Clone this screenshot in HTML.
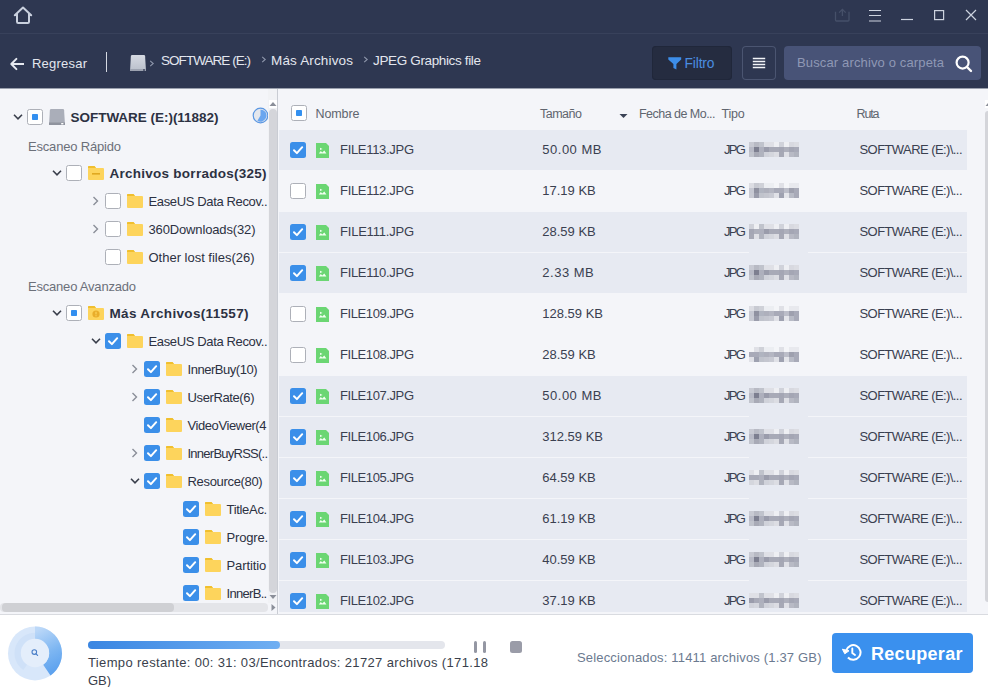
<!DOCTYPE html>
<html><head><meta charset="utf-8"><style>
html,body{margin:0;padding:0;}
body{width:988px;height:687px;overflow:hidden;position:relative;background:#fff;font-family:"Liberation Sans",sans-serif;}
.r{position:absolute;display:block;}
.t{position:absolute;white-space:pre;line-height:1;}
</style></head><body>
<div class="r" style="left:0px;top:0px;width:988px;height:88px;background:#2e3751;"></div><div class="r" style="left:0px;top:33px;width:988px;height:1px;background:#38415b;"></div><svg class="r" style="left:13px;top:5.5px;" width="20" height="19" viewBox="0 0 20 19"><path d="M1.8 9.2 L10 1.6 L18.2 9.2 M4 7.6 V15.8 Q4 17 5.2 17 H14.8 Q16 17 16 15.8 V7.6" fill="none" stroke="#c9d0de" stroke-width="2" stroke-linejoin="round" stroke-linecap="round"/></svg><svg class="r" style="left:834px;top:8px;" width="18" height="15" viewBox="0 0 18 15"><path d="M1.5 3.8 V12 Q1.5 13 2.5 13 H14 Q15 13 15 12 V3.8 M8.4 8 V1.2 M5.1 4.6 L8.4 1.3 L11.7 4.6" fill="none" stroke="#465069" stroke-width="1.3"/></svg><svg class="r" style="left:868px;top:8px;" width="14" height="15" viewBox="0 0 14 15"><path d="M1 2.5 H13 M1 7.5 H13 M1 13 H13" stroke="#cdd3df" stroke-width="1.2"/></svg><svg class="r" style="left:900px;top:18px;" width="14" height="3" viewBox="0 0 14 3"><path d="M1 1.5 H13" stroke="#cdd3df" stroke-width="1.2"/></svg><svg class="r" style="left:933px;top:9px;" width="12" height="12" viewBox="0 0 12 12"><rect x="1.6" y="1.6" width="9" height="9" fill="none" stroke="#cdd3df" stroke-width="1.2"/></svg><svg class="r" style="left:965px;top:9px;" width="12" height="12" viewBox="0 0 12 12"><path d="M1 1 L11 11 M11 1 L1 11" stroke="#cdd3df" stroke-width="1.2"/></svg><svg class="r" style="left:9px;top:57px;" width="17" height="14" viewBox="0 0 17 14"><path d="M15 7 H3" stroke="#e6e9f0" stroke-width="2"/><path d="M7.4 1.9 L2.3 7 L7.4 12.1" fill="none" stroke="#e6e9f0" stroke-width="2" stroke-linecap="round" stroke-linejoin="round"/></svg><div class="t" style="left:32px;top:57.00px;font-size:13px;color:#e3e6ee;letter-spacing:0.219px;">Regresar</div><div class="r" style="left:105.5px;top:52px;width:1.2px;height:20px;background:#d5d9e2;"></div><svg class="r" style="left:130px;top:55px;" width="16" height="16" viewBox="0 0 16 16"><defs><linearGradient id="dg" x1="0" y1="0" x2="0" y2="1"><stop offset="0" stop-color="#d6dae3"/><stop offset="1" stop-color="#b9bfcb"/></linearGradient></defs><path d="M2 0 H14 Q15 0 15.1 1 L16 16 H0 L0.9 1 Q1 0 2 0 Z" fill="url(#dg)"/><rect x="0" y="14" width="16" height="2" fill="#9ca2b0"/><rect x="13" y="14.4" width="2" height="1.2" fill="#2d3650"/></svg><svg class="r" style="left:149px;top:59.5px;" width="6" height="7" viewBox="0 0 6 7"><path d="M1.2 0.8 L4.2 3.5 L1.2 6.2" fill="none" stroke="#8f97ac" stroke-width="1.1"/></svg><div class="t" style="left:161px;top:53.57px;font-size:13.5px;color:#e3e6ee;letter-spacing:-0.958px;">SOFTWARE (E:)</div><svg class="r" style="left:261px;top:55.5px;" width="6" height="7" viewBox="0 0 6 7"><path d="M1.2 0.8 L4.2 3.5 L1.2 6.2" fill="none" stroke="#8f97ac" stroke-width="1.1"/></svg><div class="t" style="left:271px;top:53.57px;font-size:13.5px;color:#e3e6ee;letter-spacing:0.156px;">Más Archivos</div><svg class="r" style="left:363px;top:55.5px;" width="6" height="7" viewBox="0 0 6 7"><path d="M1.2 0.8 L4.2 3.5 L1.2 6.2" fill="none" stroke="#8f97ac" stroke-width="1.1"/></svg><div class="t" style="left:373px;top:53.57px;font-size:13.5px;color:#e3e6ee;letter-spacing:-0.356px;">JPEG Graphics file</div><div class="r" style="left:652px;top:46px;width:80px;height:34px;background:#252c40;border-radius:4px;box-shadow:inset 0 0 0 1px #20273a;"></div><svg class="r" style="left:668px;top:57px;" width="14" height="13" viewBox="0 0 14 13"><path d="M0.3 0.3 H13.2 V2.6 L8.4 7 V12.6 L5.4 11 V7 L0.3 2.6 Z" fill="#3d8ee9"/></svg><div class="t" style="left:684.5px;top:57.32px;font-size:13.8px;color:#4a8ee0;letter-spacing:-0.134px;">Filtro</div><div class="r" style="left:742px;top:46px;width:34px;height:34px;background:transparent;border-radius:4px;box-shadow:inset 0 0 0 1px #4b5571;"></div><svg class="r" style="left:752px;top:57px;" width="14" height="12" viewBox="0 0 14 12"><path d="M0.8 1.5 H13.2 M0.8 4.5 H13.2 M0.8 7.5 H13.2 M0.8 10.5 H13.2" stroke="#f2f4f8" stroke-width="1.3"/></svg><div class="r" style="left:784px;top:46px;width:197px;height:34px;background:#485377;border-radius:4px;"></div><div class="t" style="left:797px;top:56.00px;font-size:13px;color:#8f98b5;letter-spacing:0.139px;">Buscar archivo o carpeta</div><svg class="r" style="left:954px;top:55px;" width="20" height="18" viewBox="0 0 20 18"><circle cx="8.6" cy="7.6" r="6" fill="none" stroke="#ffffff" stroke-width="2.2"/><path d="M13 12 L17 16" stroke="#ffffff" stroke-width="2.4" stroke-linecap="round"/></svg><div class="r" style="left:0px;top:88px;width:988px;height:527px;background:#f4f5f9;"></div><div class="r" style="left:0px;top:88px;width:988px;height:1px;background:#9aa0ad;"></div><div class="r" style="left:0;top:89px;width:268px;height:514px;overflow:hidden;"><svg class="r" style="left:13px;top:23.5px;" width="10" height="8" viewBox="0 0 10 8"><path d="M1 1.8 L5 5.8 L9 1.8" fill="none" stroke="#3a3f4c" stroke-width="1.6"/></svg><svg class="r" style="left:27px;top:20px;" width="16" height="16" viewBox="0 0 16 16"><rect x="0.5" y="0.5" width="15" height="15" rx="2" fill="#fff" stroke="#adb0b8" stroke-width="1"/><rect x="5" y="5" width="6" height="6" rx="0.8" fill="#3390f0"/></svg><svg class="r" style="left:49px;top:20px;" width="16" height="16" viewBox="0 0 16 16"><path d="M2 0 H14 Q15 0 15.1 1 L16 16 H0 L0.9 1 Q1 0 2 0 Z" fill="#aaaeb9"/><rect x="0" y="13.5" width="16" height="2.5" fill="#8f939e"/><rect x="12.2" y="14" width="2.2" height="1.4" fill="#ffffff"/></svg><div class="t" style="left:70.5px;top:21.67px;font-size:13.5px;color:#2c3142;font-weight:700;letter-spacing:-0.028px;">SOFTWARE (E:)(11882)</div><div class="t" style="left:28px;top:51.00px;font-size:13px;color:#6c707a;letter-spacing:-0.185px;">Escaneo Rápido</div><svg class="r" style="left:52px;top:79.5px;" width="10" height="8" viewBox="0 0 10 8"><path d="M1 1.8 L5 5.8 L9 1.8" fill="none" stroke="#3a3f4c" stroke-width="1.6"/></svg><svg class="r" style="left:66px;top:76px;" width="16" height="16" viewBox="0 0 16 16"><rect x="0.5" y="0.5" width="15" height="15" rx="2" fill="#fff" stroke="#adb0b8" stroke-width="1"/></svg><svg class="r" style="left:88px;top:77px;" width="16" height="14" viewBox="0 0 16 14"><path d="M0 1 Q0 0 1 0 H6.5 L8 2 H15 Q16 2 16 3 V13 Q16 14 15 14 H1 Q0 14 0 13 Z" fill="#fdd45c"/><path d="M0 1 Q0 0 1 0 H6.5 L8 2 H0 Z" fill="#f0bf2e"/><rect x="4" y="7" width="8" height="1.6" fill="#e0a820"/></svg><div class="t" style="left:109.5px;top:77.67px;font-size:13.5px;color:#2c3142;font-weight:700;letter-spacing:0.260px;">Archivos borrados(325)</div><svg class="r" style="left:92px;top:106.5px;" width="8" height="10" viewBox="0 0 8 10"><path d="M1.5 1 L5.5 5 L1.5 9" fill="none" stroke="#8a8e98" stroke-width="1.4"/></svg><svg class="r" style="left:105px;top:104px;" width="16" height="16" viewBox="0 0 16 16"><rect x="0.5" y="0.5" width="15" height="15" rx="2" fill="#fff" stroke="#adb0b8" stroke-width="1"/></svg><svg class="r" style="left:127px;top:105px;" width="16" height="14" viewBox="0 0 16 14"><path d="M0 1 Q0 0 1 0 H6.5 L8 2 H15 Q16 2 16 3 V13 Q16 14 15 14 H1 Q0 14 0 13 Z" fill="#fdd45c"/><path d="M0 1 Q0 0 1 0 H6.5 L8 2 H0 Z" fill="#f0bf2e"/></svg><div class="t" style="left:148.5px;top:106.10px;font-size:13px;color:#2c3142;letter-spacing:-0.360px;">EaseUS Data Recov..</div><svg class="r" style="left:92px;top:134.5px;" width="8" height="10" viewBox="0 0 8 10"><path d="M1.5 1 L5.5 5 L1.5 9" fill="none" stroke="#8a8e98" stroke-width="1.4"/></svg><svg class="r" style="left:105px;top:132px;" width="16" height="16" viewBox="0 0 16 16"><rect x="0.5" y="0.5" width="15" height="15" rx="2" fill="#fff" stroke="#adb0b8" stroke-width="1"/></svg><svg class="r" style="left:127px;top:133px;" width="16" height="14" viewBox="0 0 16 14"><path d="M0 1 Q0 0 1 0 H6.5 L8 2 H15 Q16 2 16 3 V13 Q16 14 15 14 H1 Q0 14 0 13 Z" fill="#fdd45c"/><path d="M0 1 Q0 0 1 0 H6.5 L8 2 H0 Z" fill="#f0bf2e"/></svg><div class="t" style="left:148.5px;top:134.10px;font-size:13px;color:#2c3142;letter-spacing:-0.142px;">360Downloads(32)</div><svg class="r" style="left:105px;top:160px;" width="16" height="16" viewBox="0 0 16 16"><rect x="0.5" y="0.5" width="15" height="15" rx="2" fill="#fff" stroke="#adb0b8" stroke-width="1"/></svg><svg class="r" style="left:127px;top:161px;" width="16" height="14" viewBox="0 0 16 14"><path d="M0 1 Q0 0 1 0 H6.5 L8 2 H15 Q16 2 16 3 V13 Q16 14 15 14 H1 Q0 14 0 13 Z" fill="#fdd45c"/><path d="M0 1 Q0 0 1 0 H6.5 L8 2 H0 Z" fill="#f0bf2e"/></svg><div class="t" style="left:148.5px;top:162.10px;font-size:13px;color:#2c3142;letter-spacing:-0.011px;">Other lost files(26)</div><div class="t" style="left:28px;top:191.00px;font-size:13px;color:#6c707a;letter-spacing:-0.205px;">Escaneo Avanzado</div><svg class="r" style="left:52px;top:219.5px;" width="10" height="8" viewBox="0 0 10 8"><path d="M1 1.8 L5 5.8 L9 1.8" fill="none" stroke="#3a3f4c" stroke-width="1.6"/></svg><svg class="r" style="left:66px;top:216px;" width="16" height="16" viewBox="0 0 16 16"><rect x="0.5" y="0.5" width="15" height="15" rx="2" fill="#fff" stroke="#adb0b8" stroke-width="1"/><rect x="5" y="5" width="6" height="6" rx="0.8" fill="#3390f0"/></svg><svg class="r" style="left:88px;top:217px;" width="16" height="14" viewBox="0 0 16 14"><path d="M0 1 Q0 0 1 0 H6.5 L8 2 H15 Q16 2 16 3 V13 Q16 14 15 14 H1 Q0 14 0 13 Z" fill="#fdd45c"/><path d="M0 1 Q0 0 1 0 H6.5 L8 2 H0 Z" fill="#f0bf2e"/><circle cx="8" cy="8" r="3.6" fill="#e9ad2a"/><rect x="7.4" y="5.8" width="1.2" height="2.6" fill="#fdd45c"/><rect x="7.4" y="9.2" width="1.2" height="1.1" fill="#fdd45c"/></svg><div class="t" style="left:109.5px;top:217.67px;font-size:13.5px;color:#2c3142;font-weight:700;letter-spacing:0.329px;">Más Archivos(11557)</div><svg class="r" style="left:91px;top:247.5px;" width="10" height="8" viewBox="0 0 10 8"><path d="M1 1.8 L5 5.8 L9 1.8" fill="none" stroke="#3a3f4c" stroke-width="1.6"/></svg><svg class="r" style="left:105px;top:244px;" width="16" height="16" viewBox="0 0 16 16"><rect x="0" y="0" width="16" height="16" rx="2.5" fill="#3b8fe9"/><path d="M4 8.3 L6.9 11.1 L12.2 5.2" fill="none" stroke="#fff" stroke-width="2" stroke-linecap="round" stroke-linejoin="round"/></svg><svg class="r" style="left:127px;top:245px;" width="16" height="14" viewBox="0 0 16 14"><path d="M0 1 Q0 0 1 0 H6.5 L8 2 H15 Q16 2 16 3 V13 Q16 14 15 14 H1 Q0 14 0 13 Z" fill="#fdd45c"/><path d="M0 1 Q0 0 1 0 H6.5 L8 2 H0 Z" fill="#f0bf2e"/></svg><div class="t" style="left:148.5px;top:246.10px;font-size:13px;color:#2c3142;letter-spacing:-0.360px;">EaseUS Data Recov..</div><svg class="r" style="left:131px;top:274.5px;" width="8" height="10" viewBox="0 0 8 10"><path d="M1.5 1 L5.5 5 L1.5 9" fill="none" stroke="#8a8e98" stroke-width="1.4"/></svg><svg class="r" style="left:144px;top:272px;" width="16" height="16" viewBox="0 0 16 16"><rect x="0" y="0" width="16" height="16" rx="2.5" fill="#3b8fe9"/><path d="M4 8.3 L6.9 11.1 L12.2 5.2" fill="none" stroke="#fff" stroke-width="2" stroke-linecap="round" stroke-linejoin="round"/></svg><svg class="r" style="left:166px;top:273px;" width="16" height="14" viewBox="0 0 16 14"><path d="M0 1 Q0 0 1 0 H6.5 L8 2 H15 Q16 2 16 3 V13 Q16 14 15 14 H1 Q0 14 0 13 Z" fill="#fdd45c"/><path d="M0 1 Q0 0 1 0 H6.5 L8 2 H0 Z" fill="#f0bf2e"/></svg><div class="t" style="left:187.5px;top:274.10px;font-size:13px;color:#2c3142;letter-spacing:-0.469px;">InnerBuy(10)</div><svg class="r" style="left:131px;top:302.5px;" width="8" height="10" viewBox="0 0 8 10"><path d="M1.5 1 L5.5 5 L1.5 9" fill="none" stroke="#8a8e98" stroke-width="1.4"/></svg><svg class="r" style="left:144px;top:300px;" width="16" height="16" viewBox="0 0 16 16"><rect x="0" y="0" width="16" height="16" rx="2.5" fill="#3b8fe9"/><path d="M4 8.3 L6.9 11.1 L12.2 5.2" fill="none" stroke="#fff" stroke-width="2" stroke-linecap="round" stroke-linejoin="round"/></svg><svg class="r" style="left:166px;top:301px;" width="16" height="14" viewBox="0 0 16 14"><path d="M0 1 Q0 0 1 0 H6.5 L8 2 H15 Q16 2 16 3 V13 Q16 14 15 14 H1 Q0 14 0 13 Z" fill="#fdd45c"/><path d="M0 1 Q0 0 1 0 H6.5 L8 2 H0 Z" fill="#f0bf2e"/></svg><div class="t" style="left:187.5px;top:302.10px;font-size:13px;color:#2c3142;letter-spacing:-0.380px;">UserRate(6)</div><svg class="r" style="left:144px;top:328px;" width="16" height="16" viewBox="0 0 16 16"><rect x="0" y="0" width="16" height="16" rx="2.5" fill="#3b8fe9"/><path d="M4 8.3 L6.9 11.1 L12.2 5.2" fill="none" stroke="#fff" stroke-width="2" stroke-linecap="round" stroke-linejoin="round"/></svg><svg class="r" style="left:166px;top:329px;" width="16" height="14" viewBox="0 0 16 14"><path d="M0 1 Q0 0 1 0 H6.5 L8 2 H15 Q16 2 16 3 V13 Q16 14 15 14 H1 Q0 14 0 13 Z" fill="#fdd45c"/><path d="M0 1 Q0 0 1 0 H6.5 L8 2 H0 Z" fill="#f0bf2e"/></svg><div class="t" style="left:187.5px;top:330.10px;font-size:13px;color:#2c3142;letter-spacing:-0.423px;">VideoViewer(4</div><svg class="r" style="left:131px;top:358.5px;" width="8" height="10" viewBox="0 0 8 10"><path d="M1.5 1 L5.5 5 L1.5 9" fill="none" stroke="#8a8e98" stroke-width="1.4"/></svg><svg class="r" style="left:144px;top:356px;" width="16" height="16" viewBox="0 0 16 16"><rect x="0" y="0" width="16" height="16" rx="2.5" fill="#3b8fe9"/><path d="M4 8.3 L6.9 11.1 L12.2 5.2" fill="none" stroke="#fff" stroke-width="2" stroke-linecap="round" stroke-linejoin="round"/></svg><svg class="r" style="left:166px;top:357px;" width="16" height="14" viewBox="0 0 16 14"><path d="M0 1 Q0 0 1 0 H6.5 L8 2 H15 Q16 2 16 3 V13 Q16 14 15 14 H1 Q0 14 0 13 Z" fill="#fdd45c"/><path d="M0 1 Q0 0 1 0 H6.5 L8 2 H0 Z" fill="#f0bf2e"/></svg><div class="t" style="left:187.5px;top:358.10px;font-size:13px;color:#2c3142;letter-spacing:-0.748px;">InnerBuyRSS(..</div><svg class="r" style="left:130px;top:387.5px;" width="10" height="8" viewBox="0 0 10 8"><path d="M1 1.8 L5 5.8 L9 1.8" fill="none" stroke="#3a3f4c" stroke-width="1.6"/></svg><svg class="r" style="left:144px;top:384px;" width="16" height="16" viewBox="0 0 16 16"><rect x="0" y="0" width="16" height="16" rx="2.5" fill="#3b8fe9"/><path d="M4 8.3 L6.9 11.1 L12.2 5.2" fill="none" stroke="#fff" stroke-width="2" stroke-linecap="round" stroke-linejoin="round"/></svg><svg class="r" style="left:166px;top:385px;" width="16" height="14" viewBox="0 0 16 14"><path d="M0 1 Q0 0 1 0 H6.5 L8 2 H15 Q16 2 16 3 V13 Q16 14 15 14 H1 Q0 14 0 13 Z" fill="#fdd45c"/><path d="M0 1 Q0 0 1 0 H6.5 L8 2 H0 Z" fill="#f0bf2e"/></svg><div class="t" style="left:187.5px;top:386.10px;font-size:13px;color:#2c3142;letter-spacing:-0.324px;">Resource(80)</div><svg class="r" style="left:183px;top:412px;" width="16" height="16" viewBox="0 0 16 16"><rect x="0" y="0" width="16" height="16" rx="2.5" fill="#3b8fe9"/><path d="M4 8.3 L6.9 11.1 L12.2 5.2" fill="none" stroke="#fff" stroke-width="2" stroke-linecap="round" stroke-linejoin="round"/></svg><svg class="r" style="left:205px;top:413px;" width="16" height="14" viewBox="0 0 16 14"><path d="M0 1 Q0 0 1 0 H6.5 L8 2 H15 Q16 2 16 3 V13 Q16 14 15 14 H1 Q0 14 0 13 Z" fill="#fdd45c"/><path d="M0 1 Q0 0 1 0 H6.5 L8 2 H0 Z" fill="#f0bf2e"/></svg><div class="t" style="left:226.5px;top:414.10px;font-size:13px;color:#2c3142;letter-spacing:-0.308px;">TitleAc.</div><svg class="r" style="left:183px;top:440px;" width="16" height="16" viewBox="0 0 16 16"><rect x="0" y="0" width="16" height="16" rx="2.5" fill="#3b8fe9"/><path d="M4 8.3 L6.9 11.1 L12.2 5.2" fill="none" stroke="#fff" stroke-width="2" stroke-linecap="round" stroke-linejoin="round"/></svg><svg class="r" style="left:205px;top:441px;" width="16" height="14" viewBox="0 0 16 14"><path d="M0 1 Q0 0 1 0 H6.5 L8 2 H15 Q16 2 16 3 V13 Q16 14 15 14 H1 Q0 14 0 13 Z" fill="#fdd45c"/><path d="M0 1 Q0 0 1 0 H6.5 L8 2 H0 Z" fill="#f0bf2e"/></svg><div class="t" style="left:226.5px;top:442.10px;font-size:13px;color:#2c3142;letter-spacing:-0.173px;">Progre.</div><svg class="r" style="left:183px;top:468px;" width="16" height="16" viewBox="0 0 16 16"><rect x="0" y="0" width="16" height="16" rx="2.5" fill="#3b8fe9"/><path d="M4 8.3 L6.9 11.1 L12.2 5.2" fill="none" stroke="#fff" stroke-width="2" stroke-linecap="round" stroke-linejoin="round"/></svg><svg class="r" style="left:205px;top:469px;" width="16" height="14" viewBox="0 0 16 14"><path d="M0 1 Q0 0 1 0 H6.5 L8 2 H15 Q16 2 16 3 V13 Q16 14 15 14 H1 Q0 14 0 13 Z" fill="#fdd45c"/><path d="M0 1 Q0 0 1 0 H6.5 L8 2 H0 Z" fill="#f0bf2e"/></svg><div class="t" style="left:226.5px;top:470.10px;font-size:13px;color:#2c3142;letter-spacing:-0.096px;">Partitio</div><svg class="r" style="left:183px;top:496px;" width="16" height="16" viewBox="0 0 16 16"><rect x="0" y="0" width="16" height="16" rx="2.5" fill="#3b8fe9"/><path d="M4 8.3 L6.9 11.1 L12.2 5.2" fill="none" stroke="#fff" stroke-width="2" stroke-linecap="round" stroke-linejoin="round"/></svg><svg class="r" style="left:205px;top:497px;" width="16" height="14" viewBox="0 0 16 14"><path d="M0 1 Q0 0 1 0 H6.5 L8 2 H15 Q16 2 16 3 V13 Q16 14 15 14 H1 Q0 14 0 13 Z" fill="#fdd45c"/><path d="M0 1 Q0 0 1 0 H6.5 L8 2 H0 Z" fill="#f0bf2e"/></svg><div class="t" style="left:226.5px;top:498.10px;font-size:13px;color:#2c3142;letter-spacing:-0.690px;">InnerB..</div></div><svg class="r" style="left:252px;top:107px;" width="17" height="17" viewBox="0 0 17 17"><circle cx="8.5" cy="8.5" r="7.3" fill="#e4e7ed" stroke="#5b97e2" stroke-width="1.2"/><path d="M8.5 8.5 V2.4 A6.1 6.1 0 1 1 5.4 13.8 Z" fill="#6aa6ef"/></svg><div class="r" style="left:268px;top:89px;width:9px;height:514px;background:#f1f2f5;"></div><div class="r" style="left:269px;top:100px;width:8px;height:8px;background:#ffffff;"></div><svg class="r" style="left:269px;top:101px;" width="8" height="6" viewBox="0 0 8 6"><path d="M0.5 5 L4 1 L7.5 5 Z" fill="#8b8f99"/></svg><div class="r" style="left:269px;top:109px;width:8px;height:484px;background:#d4d5da;border-radius:4px;"></div><svg class="r" style="left:269px;top:594px;" width="8" height="6" viewBox="0 0 8 6"><path d="M0.5 1 L4 5 L7.5 1 Z" fill="#8b8f99"/></svg><div class="r" style="left:0px;top:603px;width:268px;height:9px;background:#e4e5e9;border-radius:4px;"></div><div class="r" style="left:2px;top:603px;width:172px;height:9px;background:#cfd0d4;border-radius:4px;"></div><svg class="r" style="left:270px;top:603px;" width="7" height="9" viewBox="0 0 7 9"><path d="M1.5 1 L5.5 4.5 L1.5 8 Z" fill="#8b8f99"/></svg><div class="r" style="left:277px;top:89px;width:1px;height:526px;background:#c9ccd3;"></div><svg class="r" style="left:291px;top:105px;" width="16" height="16" viewBox="0 0 16 16"><rect x="0.5" y="0.5" width="15" height="15" rx="2" fill="#fff" stroke="#adb0b8" stroke-width="1"/><rect x="5" y="5" width="6" height="6" rx="0.8" fill="#3390f0"/></svg><div class="t" style="left:315.5px;top:108.42px;font-size:12.5px;color:#60656f;letter-spacing:-0.094px;">Nombre</div><div class="t" style="left:540px;top:108.42px;font-size:12.5px;color:#60656f;letter-spacing:-0.497px;">Tamaño</div><svg class="r" style="left:619px;top:113px;" width="9" height="6" viewBox="0 0 9 6"><path d="M0.5 1 L4.5 5 L8.5 1 Z" fill="#3a4255"/></svg><div class="t" style="left:639px;top:108.42px;font-size:12.5px;color:#60656f;letter-spacing:-0.529px;">Fecha de Mo...</div><div class="t" style="left:721.6px;top:108.42px;font-size:12.5px;color:#60656f;letter-spacing:-0.286px;">Tipo</div><div class="t" style="left:856.5px;top:108.42px;font-size:12.5px;color:#60656f;letter-spacing:-1.135px;">Ruta</div><div class="r" style="left:278px;top:89px;width:707px;height:523px;overflow:hidden;"><div class="r" style="left:1px;top:41px;width:688px;height:40px;background:#e7eaf2;"></div><svg class="r" style="left:12px;top:53px;" width="16" height="16" viewBox="0 0 16 16"><rect x="0" y="0" width="16" height="16" rx="2.5" fill="#3b8fe9"/><path d="M4 8.3 L6.9 11.1 L12.2 5.2" fill="none" stroke="#fff" stroke-width="2" stroke-linecap="round" stroke-linejoin="round"/></svg><svg class="r" style="left:38px;top:54px;" width="13" height="15" viewBox="0 0 13 15"><path d="M0 0 H10 L13 3 V15 H0 Z" fill="#6bd673"/><path d="M4 4.8 L6.6 5.9 L4 7 Z M2.8 10.6 L4.8 8 L6.3 9.4 L8.3 7.6 L10.4 10.6 Z" fill="#f2fff2"/></svg><div class="t" style="left:62px;top:54.40px;font-size:13px;color:#3a4050;letter-spacing:-0.308px;">FILE113.JPG</div><div class="t" style="left:264.29999999999995px;top:54.40px;font-size:13px;color:#3a4050;letter-spacing:0.506px;">50.00 MB</div><div class="t" style="left:446px;top:54.40px;font-size:13px;color:#3a4050;letter-spacing:-1.648px;">JPG</div><svg class="r" style="left:471px;top:53px;" width="50" height="15" viewBox="0 0 50 15"><rect x="0" y="0" width="5" height="5" fill="#c8cad3"/><rect x="5" y="0" width="5" height="5" fill="#b8bac4"/><rect x="10" y="0" width="5" height="5" fill="#c0c3cc"/><rect x="15" y="0" width="5" height="5" fill="#dfe0e6"/><rect x="20" y="0" width="5" height="5" fill="#dfe0e6"/><rect x="25" y="0" width="5" height="5" fill="#eeeff3"/><rect x="30" y="0" width="5" height="5" fill="#d0d2da"/><rect x="35" y="0" width="5" height="5" fill="#eeeff3"/><rect x="40" y="0" width="5" height="5" fill="#d8d9e0"/><rect x="45" y="0" width="5" height="5" fill="#dcdde3"/><rect x="0" y="5" width="5" height="5" fill="#b8bac6"/><rect x="5" y="5" width="5" height="5" fill="#7d7f90"/><rect x="10" y="5" width="5" height="5" fill="#aeb0bd"/><rect x="15" y="5" width="5" height="5" fill="#9a9cab"/><rect x="20" y="5" width="5" height="5" fill="#a8aab7"/><rect x="25" y="5" width="5" height="5" fill="#a8aab7"/><rect x="30" y="5" width="5" height="5" fill="#a4a6b4"/><rect x="35" y="5" width="5" height="5" fill="#aeb0bc"/><rect x="40" y="5" width="5" height="5" fill="#a4a6b4"/><rect x="45" y="5" width="5" height="5" fill="#a8aab8"/><rect x="0" y="10" width="5" height="5" fill="#c0c3cc"/><rect x="5" y="10" width="5" height="5" fill="#a8aab6"/><rect x="10" y="10" width="5" height="5" fill="#b0b3be"/><rect x="15" y="10" width="5" height="5" fill="#d0d2da"/><rect x="20" y="10" width="5" height="5" fill="#d4d6dd"/><rect x="25" y="10" width="5" height="5" fill="#dcdde3"/><rect x="30" y="10" width="5" height="5" fill="#a6a8b5"/><rect x="35" y="10" width="5" height="5" fill="#dfe0e6"/><rect x="40" y="10" width="5" height="5" fill="#b8bac5"/><rect x="45" y="10" width="5" height="5" fill="#b0b3be"/></svg><div class="t" style="left:581.5px;top:54.40px;font-size:13px;color:#3a4050;letter-spacing:-0.574px;">SOFTWARE (E:)\...</div><svg class="r" style="left:12px;top:94px;" width="16" height="16" viewBox="0 0 16 16"><rect x="0.5" y="0.5" width="15" height="15" rx="2" fill="#fff" stroke="#adb0b8" stroke-width="1"/></svg><svg class="r" style="left:38px;top:95px;" width="13" height="15" viewBox="0 0 13 15"><path d="M0 0 H10 L13 3 V15 H0 Z" fill="#6bd673"/><path d="M4 4.8 L6.6 5.9 L4 7 Z M2.8 10.6 L4.8 8 L6.3 9.4 L8.3 7.6 L10.4 10.6 Z" fill="#f2fff2"/></svg><div class="t" style="left:62px;top:95.40px;font-size:13px;color:#3a4050;letter-spacing:-0.308px;">FILE112.JPG</div><div class="t" style="left:264.29999999999995px;top:95.40px;font-size:13px;color:#3a4050;">17.19 KB</div><div class="t" style="left:446px;top:95.40px;font-size:13px;color:#3a4050;letter-spacing:-1.648px;">JPG</div><svg class="r" style="left:471px;top:94px;" width="50" height="15" viewBox="0 0 50 15"><rect x="0" y="0" width="5" height="5" fill="#dcdde3"/><rect x="5" y="0" width="5" height="5" fill="#c8cad2"/><rect x="10" y="0" width="5" height="5" fill="#cfd1d8"/><rect x="15" y="0" width="5" height="5" fill="#eceef2"/><rect x="20" y="0" width="5" height="5" fill="#eceef2"/><rect x="25" y="0" width="5" height="5" fill="#f4f5f8"/><rect x="30" y="0" width="5" height="5" fill="#dfe0e6"/><rect x="35" y="0" width="5" height="5" fill="#f4f5f8"/><rect x="40" y="0" width="5" height="5" fill="#e8e9ee"/><rect x="45" y="0" width="5" height="5" fill="#e8e9ee"/><rect x="0" y="5" width="5" height="5" fill="#c6c8d2"/><rect x="5" y="5" width="5" height="5" fill="#8f91a0"/><rect x="10" y="5" width="5" height="5" fill="#b0b4c0"/><rect x="15" y="5" width="5" height="5" fill="#aeb0bc"/><rect x="20" y="5" width="5" height="5" fill="#b4b6c2"/><rect x="25" y="5" width="5" height="5" fill="#a8aab8"/><rect x="30" y="5" width="5" height="5" fill="#a8aab8"/><rect x="35" y="5" width="5" height="5" fill="#bcbec9"/><rect x="40" y="5" width="5" height="5" fill="#9ea0ae"/><rect x="45" y="5" width="5" height="5" fill="#a8aab8"/><rect x="0" y="10" width="5" height="5" fill="#c8cad3"/><rect x="5" y="10" width="5" height="5" fill="#9a9cab"/><rect x="10" y="10" width="5" height="5" fill="#c0c3cc"/><rect x="15" y="10" width="5" height="5" fill="#c4c6cf"/><rect x="20" y="10" width="5" height="5" fill="#c8cad3"/><rect x="25" y="10" width="5" height="5" fill="#e0e1e7"/><rect x="30" y="10" width="5" height="5" fill="#9ea1b0"/><rect x="35" y="10" width="5" height="5" fill="#e4e5ea"/><rect x="40" y="10" width="5" height="5" fill="#b8bbc6"/><rect x="45" y="10" width="5" height="5" fill="#a8aab8"/></svg><div class="t" style="left:581.5px;top:95.40px;font-size:13px;color:#3a4050;letter-spacing:-0.574px;">SOFTWARE (E:)\...</div><div class="r" style="left:1px;top:123px;width:688px;height:40px;background:#e7eaf2;"></div><div class="r" style="left:471px;top:163px;width:59px;height:1px;background:#e7eaf2;"></div><svg class="r" style="left:12px;top:135px;" width="16" height="16" viewBox="0 0 16 16"><rect x="0" y="0" width="16" height="16" rx="2.5" fill="#3b8fe9"/><path d="M4 8.3 L6.9 11.1 L12.2 5.2" fill="none" stroke="#fff" stroke-width="2" stroke-linecap="round" stroke-linejoin="round"/></svg><svg class="r" style="left:38px;top:136px;" width="13" height="15" viewBox="0 0 13 15"><path d="M0 0 H10 L13 3 V15 H0 Z" fill="#6bd673"/><path d="M4 4.8 L6.6 5.9 L4 7 Z M2.8 10.6 L4.8 8 L6.3 9.4 L8.3 7.6 L10.4 10.6 Z" fill="#f2fff2"/></svg><div class="t" style="left:62px;top:136.40px;font-size:13px;color:#3a4050;letter-spacing:-0.211px;">FILE111.JPG</div><div class="t" style="left:264.29999999999995px;top:136.40px;font-size:13px;color:#3a4050;">28.59 KB</div><div class="t" style="left:446px;top:136.40px;font-size:13px;color:#3a4050;letter-spacing:-1.648px;">JPG</div><svg class="r" style="left:471px;top:135px;" width="50" height="15" viewBox="0 0 50 15"><rect x="0" y="0" width="5" height="5" fill="#d0d2da"/><rect x="5" y="0" width="5" height="5" fill="#eeeff3"/><rect x="10" y="0" width="5" height="5" fill="#c0c3cc"/><rect x="15" y="0" width="5" height="5" fill="#dfe0e6"/><rect x="20" y="0" width="5" height="5" fill="#dfe0e6"/><rect x="25" y="0" width="5" height="5" fill="#eeeff3"/><rect x="30" y="0" width="5" height="5" fill="#d0d2da"/><rect x="35" y="0" width="5" height="5" fill="#eeeff3"/><rect x="40" y="0" width="5" height="5" fill="#d8d9e0"/><rect x="45" y="0" width="5" height="5" fill="#dcdde3"/><rect x="0" y="5" width="5" height="5" fill="#a4a6b4"/><rect x="5" y="5" width="5" height="5" fill="#aeb0bc"/><rect x="10" y="5" width="5" height="5" fill="#aeb0bd"/><rect x="15" y="5" width="5" height="5" fill="#9a9cab"/><rect x="20" y="5" width="5" height="5" fill="#a8aab7"/><rect x="25" y="5" width="5" height="5" fill="#a8aab7"/><rect x="30" y="5" width="5" height="5" fill="#a4a6b4"/><rect x="35" y="5" width="5" height="5" fill="#aeb0bc"/><rect x="40" y="5" width="5" height="5" fill="#a4a6b4"/><rect x="45" y="5" width="5" height="5" fill="#a8aab8"/><rect x="0" y="10" width="5" height="5" fill="#a6a8b5"/><rect x="5" y="10" width="5" height="5" fill="#dfe0e6"/><rect x="10" y="10" width="5" height="5" fill="#b0b3be"/><rect x="15" y="10" width="5" height="5" fill="#d0d2da"/><rect x="20" y="10" width="5" height="5" fill="#d4d6dd"/><rect x="25" y="10" width="5" height="5" fill="#dcdde3"/><rect x="30" y="10" width="5" height="5" fill="#a6a8b5"/><rect x="35" y="10" width="5" height="5" fill="#dfe0e6"/><rect x="40" y="10" width="5" height="5" fill="#b8bac5"/><rect x="45" y="10" width="5" height="5" fill="#b0b3be"/></svg><div class="t" style="left:581.5px;top:136.40px;font-size:13px;color:#3a4050;letter-spacing:-0.574px;">SOFTWARE (E:)\...</div><div class="r" style="left:1px;top:164px;width:688px;height:40px;background:#e7eaf2;"></div><svg class="r" style="left:12px;top:176px;" width="16" height="16" viewBox="0 0 16 16"><rect x="0" y="0" width="16" height="16" rx="2.5" fill="#3b8fe9"/><path d="M4 8.3 L6.9 11.1 L12.2 5.2" fill="none" stroke="#fff" stroke-width="2" stroke-linecap="round" stroke-linejoin="round"/></svg><svg class="r" style="left:38px;top:177px;" width="13" height="15" viewBox="0 0 13 15"><path d="M0 0 H10 L13 3 V15 H0 Z" fill="#6bd673"/><path d="M4 4.8 L6.6 5.9 L4 7 Z M2.8 10.6 L4.8 8 L6.3 9.4 L8.3 7.6 L10.4 10.6 Z" fill="#f2fff2"/></svg><div class="t" style="left:62px;top:177.40px;font-size:13px;color:#3a4050;letter-spacing:-0.308px;">FILE110.JPG</div><div class="t" style="left:264.29999999999995px;top:177.40px;font-size:13px;color:#3a4050;letter-spacing:0.513px;">2.33 MB</div><div class="t" style="left:446px;top:177.40px;font-size:13px;color:#3a4050;letter-spacing:-1.648px;">JPG</div><svg class="r" style="left:471px;top:176px;" width="50" height="15" viewBox="0 0 50 15"><rect x="0" y="0" width="5" height="5" fill="#c8cad3"/><rect x="5" y="0" width="5" height="5" fill="#b8bac4"/><rect x="10" y="0" width="5" height="5" fill="#c0c3cc"/><rect x="15" y="0" width="5" height="5" fill="#dfe0e6"/><rect x="20" y="0" width="5" height="5" fill="#dfe0e6"/><rect x="25" y="0" width="5" height="5" fill="#eeeff3"/><rect x="30" y="0" width="5" height="5" fill="#d0d2da"/><rect x="35" y="0" width="5" height="5" fill="#eeeff3"/><rect x="40" y="0" width="5" height="5" fill="#d8d9e0"/><rect x="45" y="0" width="5" height="5" fill="#dcdde3"/><rect x="0" y="5" width="5" height="5" fill="#b8bac6"/><rect x="5" y="5" width="5" height="5" fill="#7d7f90"/><rect x="10" y="5" width="5" height="5" fill="#aeb0bd"/><rect x="15" y="5" width="5" height="5" fill="#9a9cab"/><rect x="20" y="5" width="5" height="5" fill="#a8aab7"/><rect x="25" y="5" width="5" height="5" fill="#a8aab7"/><rect x="30" y="5" width="5" height="5" fill="#a4a6b4"/><rect x="35" y="5" width="5" height="5" fill="#aeb0bc"/><rect x="40" y="5" width="5" height="5" fill="#a4a6b4"/><rect x="45" y="5" width="5" height="5" fill="#a8aab8"/><rect x="0" y="10" width="5" height="5" fill="#c0c3cc"/><rect x="5" y="10" width="5" height="5" fill="#a8aab6"/><rect x="10" y="10" width="5" height="5" fill="#b0b3be"/><rect x="15" y="10" width="5" height="5" fill="#d0d2da"/><rect x="20" y="10" width="5" height="5" fill="#d4d6dd"/><rect x="25" y="10" width="5" height="5" fill="#dcdde3"/><rect x="30" y="10" width="5" height="5" fill="#a6a8b5"/><rect x="35" y="10" width="5" height="5" fill="#dfe0e6"/><rect x="40" y="10" width="5" height="5" fill="#b8bac5"/><rect x="45" y="10" width="5" height="5" fill="#b0b3be"/></svg><div class="t" style="left:581.5px;top:177.40px;font-size:13px;color:#3a4050;letter-spacing:-0.574px;">SOFTWARE (E:)\...</div><svg class="r" style="left:12px;top:217px;" width="16" height="16" viewBox="0 0 16 16"><rect x="0.5" y="0.5" width="15" height="15" rx="2" fill="#fff" stroke="#adb0b8" stroke-width="1"/></svg><svg class="r" style="left:38px;top:218px;" width="13" height="15" viewBox="0 0 13 15"><path d="M0 0 H10 L13 3 V15 H0 Z" fill="#6bd673"/><path d="M4 4.8 L6.6 5.9 L4 7 Z M2.8 10.6 L4.8 8 L6.3 9.4 L8.3 7.6 L10.4 10.6 Z" fill="#f2fff2"/></svg><div class="t" style="left:62px;top:218.40px;font-size:13px;color:#3a4050;letter-spacing:-0.405px;">FILE109.JPG</div><div class="t" style="left:264.29999999999995px;top:218.40px;font-size:13px;color:#3a4050;">128.59 KB</div><div class="t" style="left:446px;top:218.40px;font-size:13px;color:#3a4050;letter-spacing:-1.648px;">JPG</div><svg class="r" style="left:471px;top:217px;" width="50" height="15" viewBox="0 0 50 15"><rect x="0" y="0" width="5" height="5" fill="#dcdde3"/><rect x="5" y="0" width="5" height="5" fill="#c8cad2"/><rect x="10" y="0" width="5" height="5" fill="#cfd1d8"/><rect x="15" y="0" width="5" height="5" fill="#eceef2"/><rect x="20" y="0" width="5" height="5" fill="#eceef2"/><rect x="25" y="0" width="5" height="5" fill="#f4f5f8"/><rect x="30" y="0" width="5" height="5" fill="#dfe0e6"/><rect x="35" y="0" width="5" height="5" fill="#f4f5f8"/><rect x="40" y="0" width="5" height="5" fill="#e8e9ee"/><rect x="45" y="0" width="5" height="5" fill="#e8e9ee"/><rect x="0" y="5" width="5" height="5" fill="#c6c8d2"/><rect x="5" y="5" width="5" height="5" fill="#8f91a0"/><rect x="10" y="5" width="5" height="5" fill="#b0b4c0"/><rect x="15" y="5" width="5" height="5" fill="#aeb0bc"/><rect x="20" y="5" width="5" height="5" fill="#b4b6c2"/><rect x="25" y="5" width="5" height="5" fill="#a8aab8"/><rect x="30" y="5" width="5" height="5" fill="#a8aab8"/><rect x="35" y="5" width="5" height="5" fill="#bcbec9"/><rect x="40" y="5" width="5" height="5" fill="#9ea0ae"/><rect x="45" y="5" width="5" height="5" fill="#a8aab8"/><rect x="0" y="10" width="5" height="5" fill="#c8cad3"/><rect x="5" y="10" width="5" height="5" fill="#9a9cab"/><rect x="10" y="10" width="5" height="5" fill="#c0c3cc"/><rect x="15" y="10" width="5" height="5" fill="#c4c6cf"/><rect x="20" y="10" width="5" height="5" fill="#c8cad3"/><rect x="25" y="10" width="5" height="5" fill="#e0e1e7"/><rect x="30" y="10" width="5" height="5" fill="#9ea1b0"/><rect x="35" y="10" width="5" height="5" fill="#e4e5ea"/><rect x="40" y="10" width="5" height="5" fill="#b8bbc6"/><rect x="45" y="10" width="5" height="5" fill="#a8aab8"/></svg><div class="t" style="left:581.5px;top:218.40px;font-size:13px;color:#3a4050;letter-spacing:-0.574px;">SOFTWARE (E:)\...</div><svg class="r" style="left:12px;top:258px;" width="16" height="16" viewBox="0 0 16 16"><rect x="0.5" y="0.5" width="15" height="15" rx="2" fill="#fff" stroke="#adb0b8" stroke-width="1"/></svg><svg class="r" style="left:38px;top:259px;" width="13" height="15" viewBox="0 0 13 15"><path d="M0 0 H10 L13 3 V15 H0 Z" fill="#6bd673"/><path d="M4 4.8 L6.6 5.9 L4 7 Z M2.8 10.6 L4.8 8 L6.3 9.4 L8.3 7.6 L10.4 10.6 Z" fill="#f2fff2"/></svg><div class="t" style="left:62px;top:259.40px;font-size:13px;color:#3a4050;letter-spacing:-0.405px;">FILE108.JPG</div><div class="t" style="left:264.29999999999995px;top:259.40px;font-size:13px;color:#3a4050;">28.59 KB</div><div class="t" style="left:446px;top:259.40px;font-size:13px;color:#3a4050;letter-spacing:-1.648px;">JPG</div><svg class="r" style="left:471px;top:258px;" width="50" height="15" viewBox="0 0 50 15"><rect x="0" y="0" width="5" height="5" fill="#f4f5f8"/><rect x="5" y="0" width="5" height="5" fill="#dfe0e6"/><rect x="10" y="0" width="5" height="5" fill="#cfd1d8"/><rect x="15" y="0" width="5" height="5" fill="#eceef2"/><rect x="20" y="0" width="5" height="5" fill="#eceef2"/><rect x="25" y="0" width="5" height="5" fill="#f4f5f8"/><rect x="30" y="0" width="5" height="5" fill="#dfe0e6"/><rect x="35" y="0" width="5" height="5" fill="#f4f5f8"/><rect x="40" y="0" width="5" height="5" fill="#e8e9ee"/><rect x="45" y="0" width="5" height="5" fill="#e8e9ee"/><rect x="0" y="5" width="5" height="5" fill="#a8aab8"/><rect x="5" y="5" width="5" height="5" fill="#a8aab8"/><rect x="10" y="5" width="5" height="5" fill="#b0b4c0"/><rect x="15" y="5" width="5" height="5" fill="#aeb0bc"/><rect x="20" y="5" width="5" height="5" fill="#b4b6c2"/><rect x="25" y="5" width="5" height="5" fill="#a8aab8"/><rect x="30" y="5" width="5" height="5" fill="#a8aab8"/><rect x="35" y="5" width="5" height="5" fill="#bcbec9"/><rect x="40" y="5" width="5" height="5" fill="#9ea0ae"/><rect x="45" y="5" width="5" height="5" fill="#a8aab8"/><rect x="0" y="10" width="5" height="5" fill="#e0e1e7"/><rect x="5" y="10" width="5" height="5" fill="#9ea1b0"/><rect x="10" y="10" width="5" height="5" fill="#c0c3cc"/><rect x="15" y="10" width="5" height="5" fill="#c4c6cf"/><rect x="20" y="10" width="5" height="5" fill="#c8cad3"/><rect x="25" y="10" width="5" height="5" fill="#e0e1e7"/><rect x="30" y="10" width="5" height="5" fill="#9ea1b0"/><rect x="35" y="10" width="5" height="5" fill="#e4e5ea"/><rect x="40" y="10" width="5" height="5" fill="#b8bbc6"/><rect x="45" y="10" width="5" height="5" fill="#a8aab8"/></svg><div class="t" style="left:581.5px;top:259.40px;font-size:13px;color:#3a4050;letter-spacing:-0.574px;">SOFTWARE (E:)\...</div><div class="r" style="left:1px;top:287px;width:688px;height:40px;background:#e7eaf2;"></div><div class="r" style="left:471px;top:327px;width:59px;height:1px;background:#e7eaf2;"></div><svg class="r" style="left:12px;top:299px;" width="16" height="16" viewBox="0 0 16 16"><rect x="0" y="0" width="16" height="16" rx="2.5" fill="#3b8fe9"/><path d="M4 8.3 L6.9 11.1 L12.2 5.2" fill="none" stroke="#fff" stroke-width="2" stroke-linecap="round" stroke-linejoin="round"/></svg><svg class="r" style="left:38px;top:300px;" width="13" height="15" viewBox="0 0 13 15"><path d="M0 0 H10 L13 3 V15 H0 Z" fill="#6bd673"/><path d="M4 4.8 L6.6 5.9 L4 7 Z M2.8 10.6 L4.8 8 L6.3 9.4 L8.3 7.6 L10.4 10.6 Z" fill="#f2fff2"/></svg><div class="t" style="left:62px;top:300.40px;font-size:13px;color:#3a4050;letter-spacing:-0.405px;">FILE107.JPG</div><div class="t" style="left:264.29999999999995px;top:300.40px;font-size:13px;color:#3a4050;letter-spacing:0.506px;">50.00 MB</div><div class="t" style="left:446px;top:300.40px;font-size:13px;color:#3a4050;letter-spacing:-1.648px;">JPG</div><svg class="r" style="left:471px;top:299px;" width="50" height="15" viewBox="0 0 50 15"><rect x="0" y="0" width="5" height="5" fill="#c8cad3"/><rect x="5" y="0" width="5" height="5" fill="#b8bac4"/><rect x="10" y="0" width="5" height="5" fill="#c0c3cc"/><rect x="15" y="0" width="5" height="5" fill="#dfe0e6"/><rect x="20" y="0" width="5" height="5" fill="#dfe0e6"/><rect x="25" y="0" width="5" height="5" fill="#eeeff3"/><rect x="30" y="0" width="5" height="5" fill="#d0d2da"/><rect x="35" y="0" width="5" height="5" fill="#eeeff3"/><rect x="40" y="0" width="5" height="5" fill="#d8d9e0"/><rect x="45" y="0" width="5" height="5" fill="#dcdde3"/><rect x="0" y="5" width="5" height="5" fill="#b8bac6"/><rect x="5" y="5" width="5" height="5" fill="#7d7f90"/><rect x="10" y="5" width="5" height="5" fill="#aeb0bd"/><rect x="15" y="5" width="5" height="5" fill="#9a9cab"/><rect x="20" y="5" width="5" height="5" fill="#a8aab7"/><rect x="25" y="5" width="5" height="5" fill="#a8aab7"/><rect x="30" y="5" width="5" height="5" fill="#a4a6b4"/><rect x="35" y="5" width="5" height="5" fill="#aeb0bc"/><rect x="40" y="5" width="5" height="5" fill="#a4a6b4"/><rect x="45" y="5" width="5" height="5" fill="#a8aab8"/><rect x="0" y="10" width="5" height="5" fill="#c0c3cc"/><rect x="5" y="10" width="5" height="5" fill="#a8aab6"/><rect x="10" y="10" width="5" height="5" fill="#b0b3be"/><rect x="15" y="10" width="5" height="5" fill="#d0d2da"/><rect x="20" y="10" width="5" height="5" fill="#d4d6dd"/><rect x="25" y="10" width="5" height="5" fill="#dcdde3"/><rect x="30" y="10" width="5" height="5" fill="#a6a8b5"/><rect x="35" y="10" width="5" height="5" fill="#dfe0e6"/><rect x="40" y="10" width="5" height="5" fill="#b8bac5"/><rect x="45" y="10" width="5" height="5" fill="#b0b3be"/></svg><div class="t" style="left:581.5px;top:300.40px;font-size:13px;color:#3a4050;letter-spacing:-0.574px;">SOFTWARE (E:)\...</div><div class="r" style="left:1px;top:328px;width:688px;height:40px;background:#e7eaf2;"></div><div class="r" style="left:471px;top:368px;width:59px;height:1px;background:#e7eaf2;"></div><svg class="r" style="left:12px;top:340px;" width="16" height="16" viewBox="0 0 16 16"><rect x="0" y="0" width="16" height="16" rx="2.5" fill="#3b8fe9"/><path d="M4 8.3 L6.9 11.1 L12.2 5.2" fill="none" stroke="#fff" stroke-width="2" stroke-linecap="round" stroke-linejoin="round"/></svg><svg class="r" style="left:38px;top:341px;" width="13" height="15" viewBox="0 0 13 15"><path d="M0 0 H10 L13 3 V15 H0 Z" fill="#6bd673"/><path d="M4 4.8 L6.6 5.9 L4 7 Z M2.8 10.6 L4.8 8 L6.3 9.4 L8.3 7.6 L10.4 10.6 Z" fill="#f2fff2"/></svg><div class="t" style="left:62px;top:341.40px;font-size:13px;color:#3a4050;letter-spacing:-0.405px;">FILE106.JPG</div><div class="t" style="left:264.29999999999995px;top:341.40px;font-size:13px;color:#3a4050;">312.59 KB</div><div class="t" style="left:446px;top:341.40px;font-size:13px;color:#3a4050;letter-spacing:-1.648px;">JPG</div><svg class="r" style="left:471px;top:340px;" width="50" height="15" viewBox="0 0 50 15"><rect x="0" y="0" width="5" height="5" fill="#c8cad3"/><rect x="5" y="0" width="5" height="5" fill="#b8bac4"/><rect x="10" y="0" width="5" height="5" fill="#c0c3cc"/><rect x="15" y="0" width="5" height="5" fill="#dfe0e6"/><rect x="20" y="0" width="5" height="5" fill="#dfe0e6"/><rect x="25" y="0" width="5" height="5" fill="#eeeff3"/><rect x="30" y="0" width="5" height="5" fill="#d0d2da"/><rect x="35" y="0" width="5" height="5" fill="#eeeff3"/><rect x="40" y="0" width="5" height="5" fill="#d8d9e0"/><rect x="45" y="0" width="5" height="5" fill="#dcdde3"/><rect x="0" y="5" width="5" height="5" fill="#b8bac6"/><rect x="5" y="5" width="5" height="5" fill="#7d7f90"/><rect x="10" y="5" width="5" height="5" fill="#aeb0bd"/><rect x="15" y="5" width="5" height="5" fill="#9a9cab"/><rect x="20" y="5" width="5" height="5" fill="#a8aab7"/><rect x="25" y="5" width="5" height="5" fill="#a8aab7"/><rect x="30" y="5" width="5" height="5" fill="#a4a6b4"/><rect x="35" y="5" width="5" height="5" fill="#aeb0bc"/><rect x="40" y="5" width="5" height="5" fill="#a4a6b4"/><rect x="45" y="5" width="5" height="5" fill="#a8aab8"/><rect x="0" y="10" width="5" height="5" fill="#c0c3cc"/><rect x="5" y="10" width="5" height="5" fill="#a8aab6"/><rect x="10" y="10" width="5" height="5" fill="#b0b3be"/><rect x="15" y="10" width="5" height="5" fill="#d0d2da"/><rect x="20" y="10" width="5" height="5" fill="#d4d6dd"/><rect x="25" y="10" width="5" height="5" fill="#dcdde3"/><rect x="30" y="10" width="5" height="5" fill="#a6a8b5"/><rect x="35" y="10" width="5" height="5" fill="#dfe0e6"/><rect x="40" y="10" width="5" height="5" fill="#b8bac5"/><rect x="45" y="10" width="5" height="5" fill="#b0b3be"/></svg><div class="t" style="left:581.5px;top:341.40px;font-size:13px;color:#3a4050;letter-spacing:-0.574px;">SOFTWARE (E:)\...</div><div class="r" style="left:1px;top:369px;width:688px;height:40px;background:#e7eaf2;"></div><div class="r" style="left:471px;top:409px;width:59px;height:1px;background:#e7eaf2;"></div><svg class="r" style="left:12px;top:381px;" width="16" height="16" viewBox="0 0 16 16"><rect x="0" y="0" width="16" height="16" rx="2.5" fill="#3b8fe9"/><path d="M4 8.3 L6.9 11.1 L12.2 5.2" fill="none" stroke="#fff" stroke-width="2" stroke-linecap="round" stroke-linejoin="round"/></svg><svg class="r" style="left:38px;top:382px;" width="13" height="15" viewBox="0 0 13 15"><path d="M0 0 H10 L13 3 V15 H0 Z" fill="#6bd673"/><path d="M4 4.8 L6.6 5.9 L4 7 Z M2.8 10.6 L4.8 8 L6.3 9.4 L8.3 7.6 L10.4 10.6 Z" fill="#f2fff2"/></svg><div class="t" style="left:62px;top:382.40px;font-size:13px;color:#3a4050;letter-spacing:-0.405px;">FILE105.JPG</div><div class="t" style="left:264.29999999999995px;top:382.40px;font-size:13px;color:#3a4050;">64.59 KB</div><div class="t" style="left:446px;top:382.40px;font-size:13px;color:#3a4050;letter-spacing:-1.648px;">JPG</div><svg class="r" style="left:471px;top:381px;" width="50" height="15" viewBox="0 0 50 15"><rect x="0" y="0" width="5" height="5" fill="#dfe0e6"/><rect x="5" y="0" width="5" height="5" fill="#eeeff3"/><rect x="10" y="0" width="5" height="5" fill="#c0c3cc"/><rect x="15" y="0" width="5" height="5" fill="#dfe0e6"/><rect x="20" y="0" width="5" height="5" fill="#dfe0e6"/><rect x="25" y="0" width="5" height="5" fill="#eeeff3"/><rect x="30" y="0" width="5" height="5" fill="#d0d2da"/><rect x="35" y="0" width="5" height="5" fill="#eeeff3"/><rect x="40" y="0" width="5" height="5" fill="#d8d9e0"/><rect x="45" y="0" width="5" height="5" fill="#dcdde3"/><rect x="0" y="5" width="5" height="5" fill="#a8aab7"/><rect x="5" y="5" width="5" height="5" fill="#a8aab7"/><rect x="10" y="5" width="5" height="5" fill="#aeb0bd"/><rect x="15" y="5" width="5" height="5" fill="#9a9cab"/><rect x="20" y="5" width="5" height="5" fill="#a8aab7"/><rect x="25" y="5" width="5" height="5" fill="#a8aab7"/><rect x="30" y="5" width="5" height="5" fill="#a4a6b4"/><rect x="35" y="5" width="5" height="5" fill="#aeb0bc"/><rect x="40" y="5" width="5" height="5" fill="#a4a6b4"/><rect x="45" y="5" width="5" height="5" fill="#a8aab8"/><rect x="0" y="10" width="5" height="5" fill="#d4d6dd"/><rect x="5" y="10" width="5" height="5" fill="#dcdde3"/><rect x="10" y="10" width="5" height="5" fill="#b0b3be"/><rect x="15" y="10" width="5" height="5" fill="#d0d2da"/><rect x="20" y="10" width="5" height="5" fill="#d4d6dd"/><rect x="25" y="10" width="5" height="5" fill="#dcdde3"/><rect x="30" y="10" width="5" height="5" fill="#a6a8b5"/><rect x="35" y="10" width="5" height="5" fill="#dfe0e6"/><rect x="40" y="10" width="5" height="5" fill="#b8bac5"/><rect x="45" y="10" width="5" height="5" fill="#b0b3be"/></svg><div class="t" style="left:581.5px;top:382.40px;font-size:13px;color:#3a4050;letter-spacing:-0.574px;">SOFTWARE (E:)\...</div><div class="r" style="left:1px;top:410px;width:688px;height:40px;background:#e7eaf2;"></div><div class="r" style="left:471px;top:450px;width:59px;height:1px;background:#e7eaf2;"></div><svg class="r" style="left:12px;top:422px;" width="16" height="16" viewBox="0 0 16 16"><rect x="0" y="0" width="16" height="16" rx="2.5" fill="#3b8fe9"/><path d="M4 8.3 L6.9 11.1 L12.2 5.2" fill="none" stroke="#fff" stroke-width="2" stroke-linecap="round" stroke-linejoin="round"/></svg><svg class="r" style="left:38px;top:423px;" width="13" height="15" viewBox="0 0 13 15"><path d="M0 0 H10 L13 3 V15 H0 Z" fill="#6bd673"/><path d="M4 4.8 L6.6 5.9 L4 7 Z M2.8 10.6 L4.8 8 L6.3 9.4 L8.3 7.6 L10.4 10.6 Z" fill="#f2fff2"/></svg><div class="t" style="left:62px;top:423.40px;font-size:13px;color:#3a4050;letter-spacing:-0.405px;">FILE104.JPG</div><div class="t" style="left:264.29999999999995px;top:423.40px;font-size:13px;color:#3a4050;">61.19 KB</div><div class="t" style="left:446px;top:423.40px;font-size:13px;color:#3a4050;letter-spacing:-1.648px;">JPG</div><svg class="r" style="left:471px;top:422px;" width="50" height="15" viewBox="0 0 50 15"><rect x="0" y="0" width="5" height="5" fill="#c8cad3"/><rect x="5" y="0" width="5" height="5" fill="#b8bac4"/><rect x="10" y="0" width="5" height="5" fill="#c0c3cc"/><rect x="15" y="0" width="5" height="5" fill="#dfe0e6"/><rect x="20" y="0" width="5" height="5" fill="#dfe0e6"/><rect x="25" y="0" width="5" height="5" fill="#eeeff3"/><rect x="30" y="0" width="5" height="5" fill="#d0d2da"/><rect x="35" y="0" width="5" height="5" fill="#eeeff3"/><rect x="40" y="0" width="5" height="5" fill="#d8d9e0"/><rect x="45" y="0" width="5" height="5" fill="#dcdde3"/><rect x="0" y="5" width="5" height="5" fill="#b8bac6"/><rect x="5" y="5" width="5" height="5" fill="#7d7f90"/><rect x="10" y="5" width="5" height="5" fill="#aeb0bd"/><rect x="15" y="5" width="5" height="5" fill="#9a9cab"/><rect x="20" y="5" width="5" height="5" fill="#a8aab7"/><rect x="25" y="5" width="5" height="5" fill="#a8aab7"/><rect x="30" y="5" width="5" height="5" fill="#a4a6b4"/><rect x="35" y="5" width="5" height="5" fill="#aeb0bc"/><rect x="40" y="5" width="5" height="5" fill="#a4a6b4"/><rect x="45" y="5" width="5" height="5" fill="#a8aab8"/><rect x="0" y="10" width="5" height="5" fill="#c0c3cc"/><rect x="5" y="10" width="5" height="5" fill="#a8aab6"/><rect x="10" y="10" width="5" height="5" fill="#b0b3be"/><rect x="15" y="10" width="5" height="5" fill="#d0d2da"/><rect x="20" y="10" width="5" height="5" fill="#d4d6dd"/><rect x="25" y="10" width="5" height="5" fill="#dcdde3"/><rect x="30" y="10" width="5" height="5" fill="#a6a8b5"/><rect x="35" y="10" width="5" height="5" fill="#dfe0e6"/><rect x="40" y="10" width="5" height="5" fill="#b8bac5"/><rect x="45" y="10" width="5" height="5" fill="#b0b3be"/></svg><div class="t" style="left:581.5px;top:423.40px;font-size:13px;color:#3a4050;letter-spacing:-0.574px;">SOFTWARE (E:)\...</div><div class="r" style="left:1px;top:451px;width:688px;height:40px;background:#e7eaf2;"></div><div class="r" style="left:471px;top:491px;width:59px;height:1px;background:#e7eaf2;"></div><svg class="r" style="left:12px;top:463px;" width="16" height="16" viewBox="0 0 16 16"><rect x="0" y="0" width="16" height="16" rx="2.5" fill="#3b8fe9"/><path d="M4 8.3 L6.9 11.1 L12.2 5.2" fill="none" stroke="#fff" stroke-width="2" stroke-linecap="round" stroke-linejoin="round"/></svg><svg class="r" style="left:38px;top:464px;" width="13" height="15" viewBox="0 0 13 15"><path d="M0 0 H10 L13 3 V15 H0 Z" fill="#6bd673"/><path d="M4 4.8 L6.6 5.9 L4 7 Z M2.8 10.6 L4.8 8 L6.3 9.4 L8.3 7.6 L10.4 10.6 Z" fill="#f2fff2"/></svg><div class="t" style="left:62px;top:464.40px;font-size:13px;color:#3a4050;letter-spacing:-0.405px;">FILE103.JPG</div><div class="t" style="left:264.29999999999995px;top:464.40px;font-size:13px;color:#3a4050;">40.59 KB</div><div class="t" style="left:446px;top:464.40px;font-size:13px;color:#3a4050;letter-spacing:-1.648px;">JPG</div><svg class="r" style="left:471px;top:463px;" width="50" height="15" viewBox="0 0 50 15"><rect x="0" y="0" width="5" height="5" fill="#c8cad3"/><rect x="5" y="0" width="5" height="5" fill="#b8bac4"/><rect x="10" y="0" width="5" height="5" fill="#c0c3cc"/><rect x="15" y="0" width="5" height="5" fill="#dfe0e6"/><rect x="20" y="0" width="5" height="5" fill="#dfe0e6"/><rect x="25" y="0" width="5" height="5" fill="#eeeff3"/><rect x="30" y="0" width="5" height="5" fill="#d0d2da"/><rect x="35" y="0" width="5" height="5" fill="#eeeff3"/><rect x="40" y="0" width="5" height="5" fill="#d8d9e0"/><rect x="45" y="0" width="5" height="5" fill="#dcdde3"/><rect x="0" y="5" width="5" height="5" fill="#b8bac6"/><rect x="5" y="5" width="5" height="5" fill="#7d7f90"/><rect x="10" y="5" width="5" height="5" fill="#aeb0bd"/><rect x="15" y="5" width="5" height="5" fill="#9a9cab"/><rect x="20" y="5" width="5" height="5" fill="#a8aab7"/><rect x="25" y="5" width="5" height="5" fill="#a8aab7"/><rect x="30" y="5" width="5" height="5" fill="#a4a6b4"/><rect x="35" y="5" width="5" height="5" fill="#aeb0bc"/><rect x="40" y="5" width="5" height="5" fill="#a4a6b4"/><rect x="45" y="5" width="5" height="5" fill="#a8aab8"/><rect x="0" y="10" width="5" height="5" fill="#c0c3cc"/><rect x="5" y="10" width="5" height="5" fill="#a8aab6"/><rect x="10" y="10" width="5" height="5" fill="#b0b3be"/><rect x="15" y="10" width="5" height="5" fill="#d0d2da"/><rect x="20" y="10" width="5" height="5" fill="#d4d6dd"/><rect x="25" y="10" width="5" height="5" fill="#dcdde3"/><rect x="30" y="10" width="5" height="5" fill="#a6a8b5"/><rect x="35" y="10" width="5" height="5" fill="#dfe0e6"/><rect x="40" y="10" width="5" height="5" fill="#b8bac5"/><rect x="45" y="10" width="5" height="5" fill="#b0b3be"/></svg><div class="t" style="left:581.5px;top:464.40px;font-size:13px;color:#3a4050;letter-spacing:-0.574px;">SOFTWARE (E:)\...</div><div class="r" style="left:1px;top:492px;width:688px;height:40px;background:#e7eaf2;"></div><svg class="r" style="left:12px;top:504px;" width="16" height="16" viewBox="0 0 16 16"><rect x="0" y="0" width="16" height="16" rx="2.5" fill="#3b8fe9"/><path d="M4 8.3 L6.9 11.1 L12.2 5.2" fill="none" stroke="#fff" stroke-width="2" stroke-linecap="round" stroke-linejoin="round"/></svg><svg class="r" style="left:38px;top:505px;" width="13" height="15" viewBox="0 0 13 15"><path d="M0 0 H10 L13 3 V15 H0 Z" fill="#6bd673"/><path d="M4 4.8 L6.6 5.9 L4 7 Z M2.8 10.6 L4.8 8 L6.3 9.4 L8.3 7.6 L10.4 10.6 Z" fill="#f2fff2"/></svg><div class="t" style="left:62px;top:505.40px;font-size:13px;color:#3a4050;letter-spacing:-0.405px;">FILE102.JPG</div><div class="t" style="left:264.29999999999995px;top:505.40px;font-size:13px;color:#3a4050;">37.19 KB</div><div class="t" style="left:446px;top:505.40px;font-size:13px;color:#3a4050;letter-spacing:-1.648px;">JPG</div><svg class="r" style="left:471px;top:504px;" width="50" height="15" viewBox="0 0 50 15"><rect x="0" y="0" width="5" height="5" fill="#dfe0e6"/><rect x="5" y="0" width="5" height="5" fill="#dfe0e6"/><rect x="10" y="0" width="5" height="5" fill="#c0c3cc"/><rect x="15" y="0" width="5" height="5" fill="#dfe0e6"/><rect x="20" y="0" width="5" height="5" fill="#dfe0e6"/><rect x="25" y="0" width="5" height="5" fill="#eeeff3"/><rect x="30" y="0" width="5" height="5" fill="#d0d2da"/><rect x="35" y="0" width="5" height="5" fill="#eeeff3"/><rect x="40" y="0" width="5" height="5" fill="#d8d9e0"/><rect x="45" y="0" width="5" height="5" fill="#dcdde3"/><rect x="0" y="5" width="5" height="5" fill="#9a9cab"/><rect x="5" y="5" width="5" height="5" fill="#a8aab7"/><rect x="10" y="5" width="5" height="5" fill="#aeb0bd"/><rect x="15" y="5" width="5" height="5" fill="#9a9cab"/><rect x="20" y="5" width="5" height="5" fill="#a8aab7"/><rect x="25" y="5" width="5" height="5" fill="#a8aab7"/><rect x="30" y="5" width="5" height="5" fill="#a4a6b4"/><rect x="35" y="5" width="5" height="5" fill="#aeb0bc"/><rect x="40" y="5" width="5" height="5" fill="#a4a6b4"/><rect x="45" y="5" width="5" height="5" fill="#a8aab8"/><rect x="0" y="10" width="5" height="5" fill="#d0d2da"/><rect x="5" y="10" width="5" height="5" fill="#d4d6dd"/><rect x="10" y="10" width="5" height="5" fill="#b0b3be"/><rect x="15" y="10" width="5" height="5" fill="#d0d2da"/><rect x="20" y="10" width="5" height="5" fill="#d4d6dd"/><rect x="25" y="10" width="5" height="5" fill="#dcdde3"/><rect x="30" y="10" width="5" height="5" fill="#a6a8b5"/><rect x="35" y="10" width="5" height="5" fill="#dfe0e6"/><rect x="40" y="10" width="5" height="5" fill="#b8bac5"/><rect x="45" y="10" width="5" height="5" fill="#b0b3be"/></svg><div class="t" style="left:581.5px;top:505.40px;font-size:13px;color:#3a4050;letter-spacing:-0.574px;">SOFTWARE (E:)\...</div></div><div class="r" style="left:985px;top:100px;width:3px;height:8px;background:#ffffff;"></div><div class="r" style="left:985px;top:111px;width:3px;height:491px;background:#d4d5da;border-radius:3px 0 0 3px;"></div><svg class="r" style="left:985px;top:101px;" width="3" height="6" viewBox="0 0 3 6"><path d="M0.5 5 L3 2 V5 Z" fill="#8b8f99"/></svg><div class="r" style="left:0px;top:614px;width:988px;height:1px;background:#d9dbe0;"></div><div class="r" style="left:0px;top:615px;width:988px;height:72px;background:#ffffff;"></div><svg class="r" style="left:7px;top:626px;" width="56" height="56" viewBox="0 0 56 56"><defs><linearGradient id="pg" x1="0.3" y1="0" x2="0.6" y2="1"><stop offset="0" stop-color="#bcd8f8"/><stop offset="0.55" stop-color="#7db6f2"/><stop offset="1" stop-color="#5aa0ee"/></linearGradient></defs>
<circle cx="28" cy="27.4" r="27" fill="#d8e7fa"/>
<path d="M28 27.2 L16.24 43.99 A20.5 20.5 0 0 1 28 6.7 Z" fill="#cfe1f8"/>
<path d="M28 0.4 A27 27 0 0 1 43.5 49.5 L36.2 38.7 A14.2 14.2 0 0 0 28 13 Z" fill="url(#pg)"/>
<circle cx="28" cy="27" r="14.2" fill="#e4eefb"/>
<circle cx="27.3" cy="26.1" r="2.3" fill="none" stroke="#4a7fc8" stroke-width="1.1"/><path d="M29 27.8 L30.6 29.4" stroke="#4a7fc8" stroke-width="1.2" stroke-linecap="round"/></svg><div class="r" style="left:88px;top:641px;width:357px;height:8px;background:#e4e6ec;border-radius:4px;"></div><div class="r" style="left:88px;top:641px;width:192px;height:8px;background:linear-gradient(90deg,#3a86e2,#70aff2);border-radius:4px;"></div><div class="t" style="left:88px;top:655.50px;font-size:13px;color:#3a3f4c;letter-spacing:0.352px;">Tiempo restante: 00: 31: 03/Encontrados: 21727 archivos (171.18</div><div class="t" style="left:88px;top:674.20px;font-size:13px;color:#3a3f4c;">GB)</div><div class="r" style="left:474px;top:641px;width:3px;height:11.5px;background:#9497a3;border-radius:1.5px;"></div><div class="r" style="left:483px;top:641px;width:3px;height:11.5px;background:#9497a3;border-radius:1.5px;"></div><div class="r" style="left:510px;top:641px;width:12px;height:12px;background:#9a9ca8;border-radius:2.5px;"></div><div class="t" style="left:577px;top:651.00px;font-size:13px;color:#6b7a90;letter-spacing:0.171px;">Seleccionados: 11411 archivos (1.37 GB)</div><div class="r" style="left:832px;top:633px;width:141px;height:40px;background:#3a90ee;border-radius:4px;"></div><svg class="r" style="left:841px;top:643px;" width="21" height="19" viewBox="0 0 21 19"><path d="M5.2 7.5 A7.3 7.3 0 1 1 6.94 14.46" fill="none" stroke="#fff" stroke-width="2"/><path d="M1.4 6.2 L3.8 10.8 L8 7.8 Z" fill="#fff" stroke="#fff" stroke-width="1" stroke-linejoin="round"/><path d="M11.3 5.4 V9.9 L14 11.9" fill="none" stroke="#fff" stroke-width="1.9" stroke-linecap="round"/></svg><div class="t" style="left:871px;top:644.76px;font-size:18px;color:#ffffff;font-weight:700;letter-spacing:0.307px;">Recuperar</div>
</body></html>
